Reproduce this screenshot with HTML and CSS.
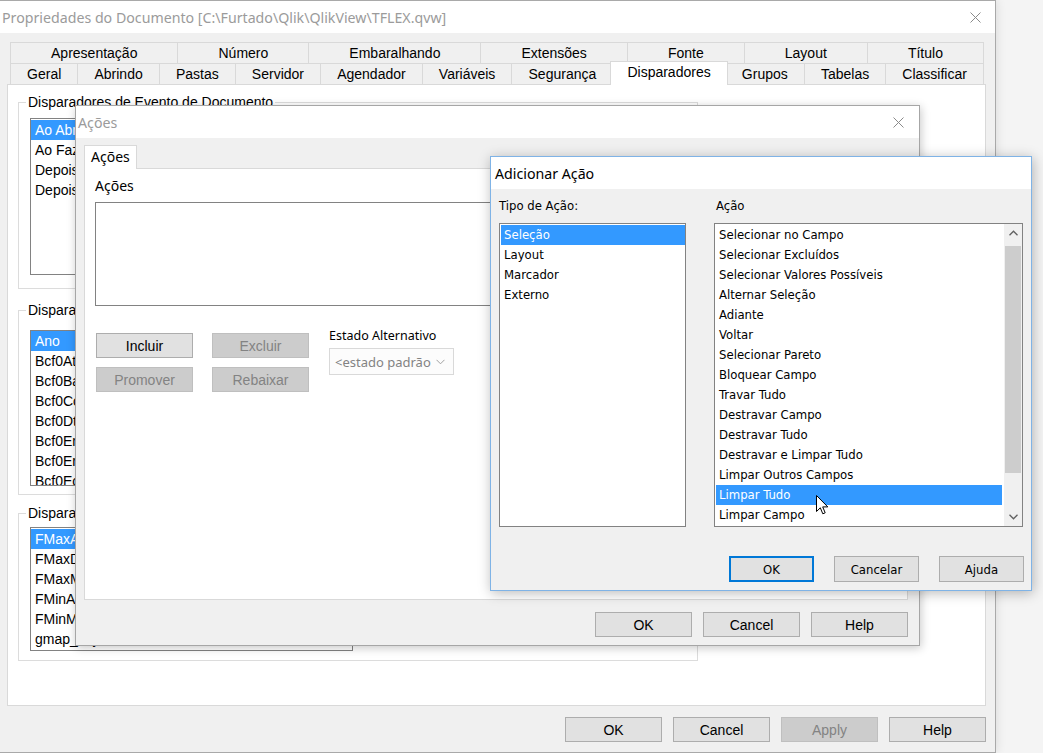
FILE: index.html
```html
<!DOCTYPE html>
<html lang="pt">
<head>
<meta charset="utf-8">
<title>Propriedades do Documento</title>
<link rel="stylesheet" href="styles.css">
</head>
<body>
<div class="desktop">

  <div class="win win-main">
    <div class="titlebar">
      <span class="title">Propriedades do Documento [C:\Furtado\Qlik\QlikView\TFLEX.qvw]</span>
      <span class="closebtn main-close"><svg width="11" height="11" viewBox="0 0 11 11"><path d="M0.5 0.5L10.5 10.5M10.5 0.5L0.5 10.5" stroke="#8a8a8a" stroke-width="1" fill="none"/></svg></span>
    </div>
    <div class="main-body">
      <div class="tabrows">
        <div class="tabrow">
          <div class="tab">Apresentação</div>
          <div class="tab">Número</div>
          <div class="tab">Embaralhando</div>
          <div class="tab">Extensões</div>
          <div class="tab">Fonte</div>
          <div class="tab">Layout</div>
          <div class="tab">Título</div>
        </div>
        <div class="tabrow">
          <div class="tab">Geral</div>
          <div class="tab">Abrindo</div>
          <div class="tab">Pastas</div>
          <div class="tab">Servidor</div>
          <div class="tab">Agendador</div>
          <div class="tab">Variáveis</div>
          <div class="tab">Segurança</div>
          <div class="tab sel">Disparadores</div>
          <div class="tab">Grupos</div>
          <div class="tab">Tabelas</div>
          <div class="tab">Classificar</div>
        </div>
      </div>
      <div class="main-panel">
        <fieldset class="group g1">
          <legend>Disparadores de Evento de Documento</legend>
          <div class="listbox lb1">
            <div class="lb-item sel">Ao Abrir</div>
            <div class="lb-item">Ao Fazer</div>
            <div class="lb-item">Depois</div>
            <div class="lb-item">Depois</div>
          </div>
        </fieldset>
        <fieldset class="group g2">
          <legend>Disparadores de Evento de Campo</legend>
          <div class="listbox lb2">
            <div class="lb-item sel">Ano</div>
            <div class="lb-item">Bcf0Ati</div>
            <div class="lb-item">Bcf0Ba</div>
            <div class="lb-item">Bcf0Co</div>
            <div class="lb-item">Bcf0Dt</div>
            <div class="lb-item">Bcf0Em</div>
            <div class="lb-item">Bcf0Er</div>
            <div class="lb-item">Bcf0Ec</div>
          </div>
        </fieldset>
        <fieldset class="group g3">
          <legend>Disparadores de Evento de Variável</legend>
          <div class="listbox lb3">
            <div class="lb-item sel">FMaxAno</div>
            <div class="lb-item">FMaxData</div>
            <div class="lb-item">FMaxMes</div>
            <div class="lb-item">FMinAno</div>
            <div class="lb-item">FMinMes</div>
            <div class="lb-item">gmap_key</div>
          </div>
        </fieldset>
      </div>
      <div class="btnrow main-btns">
        <button class="btn w97">OK</button>
        <button class="btn w97">Cancel</button>
        <button class="btn w97 disabled">Apply</button>
        <button class="btn w97">Help</button>
      </div>
    </div>
  </div>

  <div class="win win-acoes">
    <div class="titlebar">
      <span class="title">Ações</span>
      <span class="closebtn acoes-close"><svg width="11" height="11" viewBox="0 0 11 11"><path d="M0.5 0.5L10.5 10.5M10.5 0.5L0.5 10.5" stroke="#8a8a8a" stroke-width="1" fill="none"/></svg></span>
    </div>
    <div class="acoes-body">
      <div class="ptab">Ações</div>
      <div class="acoes-panel">
        <div class="ui-label big">Ações</div>
        <div class="actions-box"></div>
        <div class="controls">
          <div class="btngrid">
            <button class="btn w97">Incluir</button>
            <button class="btn w97 disabled">Excluir</button>
            <button class="btn w97 disabled">Promover</button>
            <button class="btn w97 disabled">Rebaixar</button>
          </div>
          <div class="estado">
            <div class="ui-label">Estado Alternativo</div>
            <div class="combo">
              <span>&lt;estado padrão</span>
              <svg width="9" height="6" viewBox="0 0 9 6"><path d="M0.5 0.8L4.5 4.8L8.5 0.8" fill="none" stroke="#a0a0a0" stroke-width="1"/></svg>
            </div>
          </div>
        </div>
      </div>
      <div class="btnrow acoes-btns">
        <button class="btn w97">OK</button>
        <button class="btn w97">Cancel</button>
        <button class="btn w97">Help</button>
      </div>
    </div>
  </div>

  <div class="win win-add">
    <div class="titlebar">
      <span class="title active">Adicionar Ação</span>
    </div>
    <div class="add-body">
      <div class="add-cols">
        <div class="col col1">
          <div class="add-label">Tipo de Ação:</div>
          <div class="add-list">
            <div class="items">
              <div class="add-item sel">Seleção</div>
              <div class="add-item">Layout</div>
              <div class="add-item">Marcador</div>
              <div class="add-item">Externo</div>
            </div>
          </div>
        </div>
        <div class="col col2">
          <div class="add-label lbl-acao">Ação</div>
          <div class="add-list">
            <div class="items">
              <div class="add-item">Selecionar no Campo</div>
              <div class="add-item">Selecionar Excluídos</div>
              <div class="add-item">Selecionar Valores Possíveis</div>
              <div class="add-item">Alternar Seleção</div>
              <div class="add-item">Adiante</div>
              <div class="add-item">Voltar</div>
              <div class="add-item">Selecionar Pareto</div>
              <div class="add-item">Bloquear Campo</div>
              <div class="add-item">Travar Tudo</div>
              <div class="add-item">Destravar Campo</div>
              <div class="add-item">Destravar Tudo</div>
              <div class="add-item">Destravar e Limpar Tudo</div>
              <div class="add-item">Limpar Outros Campos</div>
              <div class="add-item sel">Limpar Tudo</div>
              <div class="add-item">Limpar Campo</div>
            </div>
            <div class="scrollbar">
              <div class="sb-arrow"><svg width="9" height="6" viewBox="0 0 9 6"><path d="M0.5 5.2L4.5 1.2L8.5 5.2" fill="none" stroke="#606060" stroke-width="1.3"/></svg></div>
              <div class="sb-track"><div class="sb-thumb"></div></div>
              <div class="sb-arrow"><svg width="9" height="6" viewBox="0 0 9 6"><path d="M0.5 0.8L4.5 4.8L8.5 0.8" fill="none" stroke="#606060" stroke-width="1.3"/></svg></div>
            </div>
          </div>
        </div>
      </div>
      <div class="btnrow add-btns">
        <button class="btn w85 default">OK</button>
        <button class="btn w85">Cancelar</button>
        <button class="btn w85">Ajuda</button>
      </div>
    </div>
  </div>

  <svg class="cursor" width="13" height="21" viewBox="0 0 13 21"><path d="M0.5 0.5L0.5 16.5L4.3 12.8L6.8 18.8L9.2 17.8L6.7 11.9L11.8 11.9Z" fill="#fff" stroke="#000" stroke-width="1" stroke-linejoin="miter"/></svg>
</div>
</body>
</html>
```

FILE: styles.css
```css
* { box-sizing: border-box; }
html, body { margin: 0; padding: 0; }
body {
  width: 1043px;
  height: 753px;
  overflow: hidden;
  background: #f4f4f4;
  font-family: "Liberation Sans", Arial, sans-serif;
  font-size: 14px;
  color: #000;
}
.desktop { position: relative; width: 1043px; height: 753px; }

/* windows on the desktop */
.win {
  position: absolute;
  display: flex;
  flex-direction: column;
  background: #f0f0f0;
}
.win-main {
  left: 0; top: 0;
  width: 996px; height: 753px;
  border: 1px solid #a9a9a9;
  border-left: 0;
  box-shadow: 0 0 10px rgba(0,0,0,0.12);
}
.win-acoes {
  left: 75px; top: 105px;
  width: 845px; height: 541px;
  border: 1px solid #a6a6a6;
  box-shadow: 1px 2px 9px rgba(0,0,0,0.22);
}
.win-add {
  left: 490px; top: 156px;
  width: 542px; height: 435px;
  border: 1px solid #7fb3e6;
  box-shadow: 1px 2px 12px rgba(0,0,0,0.28);
}

.titlebar {
  flex: none;
  height: 32px;
  background: #fff;
  display: flex;
  align-items: center;
  justify-content: space-between;
  padding-left: 2px;
  font-family: "Noto Sans", "Open Sans", sans-serif;
  font-size: 14.2px;
}
.title { color: #9b9b9b; white-space: nowrap; }
.title.active { color: #000; padding-left: 2px; }
.closebtn { display: flex; justify-content: center; align-items: center; height: 32px; }
.main-close { width: 40px; }
.acoes-close { width: 42px; }

/* main window */
.main-body {
  flex: 1;
  display: flex;
  flex-direction: column;
  padding: 9px 9px 10px 7px;
}
.tabrows { margin: 0 3px; }
.tabrow { display: flex; height: 21px; }
.tab {
  flex: 1 1 auto;
  border: 1px solid #d9d9d9;
  border-bottom: 0;
  margin-right: -1px;
  text-align: center;
  line-height: 20px;
  white-space: nowrap;
  background: #f0f0f0;
}
.tab.sel {
  background: #fff;
  height: 24px;
  margin: -2px -3px -1px -2px;
  position: relative;
  z-index: 1;
  line-height: 20px;
}
.main-panel {
  height: 622px;
  background: #fff;
  border: 1px solid #d9d9d9;
  padding: 0 0 0 10px;
}

.group {
  width: 680px;
  margin: 0;
  border: 1px solid #dcdcdc;
  padding: 0 11px 0 11px;
  min-width: 0;
}
.group legend {
  padding: 0 2px;
  margin-left: -4px;
  line-height: 16px;
  white-space: nowrap;
}
.g1 { margin-top: 9px; padding-top: 8px; padding-bottom: 13px; }
.g2 { margin-top: 13px; padding-top: 12px; padding-bottom: 8px; }
.g3 { margin-top: 10px; padding-top: 6px; padding-bottom: 9px; }

.listbox {
  width: 323px;
  border: 1px solid #828282;
  background: #fff;
  overflow: hidden;
  padding-top: 1px;
}
.lb1 { height: 157px; }
.lb2 { height: 156px; padding-top: 0; }
.lb3 { height: 124px; }
.lb-item {
  height: 20px;
  line-height: 20px;
  padding-left: 4px;
  white-space: nowrap;
}
.lb-item.sel { background: #3399ff; color: #fff; }

/* buttons */
.btnrow { display: flex; justify-content: flex-end; }
.btn {
  height: 25px;
  margin: 0;
  padding: 0;
  font-family: "Liberation Sans", Arial, sans-serif;
  font-size: 14px;
  color: #000;
  background: #e1e1e1;
  border: 1px solid #adadad;
  border-radius: 0;
}
.btn.disabled { background: #cccccc; border-color: #bfbfbf; color: #838383; }
.w97 { width: 97px; }
.w85 { width: 85px; height: 26px; }
.main-btns { margin-top: 11px; gap: 11px; }

/* Ações window */
.acoes-body {
  flex: 1;
  display: flex;
  flex-direction: column;
  padding: 7px 11px 0 8px;
}
.ptab {
  width: 53px;
  height: 24px;
  border: 1px solid #d9d9d9;
  border-bottom: 0;
  background: #fff;
  margin-bottom: -1px;
  position: relative;
  z-index: 1;
  padding-left: 6px;
  font-family: "Noto Sans", "Open Sans", sans-serif;
  font-size: 14px;
  line-height: 22px;
}
.acoes-panel {
  height: 432px;
  background: #fff;
  border: 1px solid #d9d9d9;
  padding: 9px 10px 0 10px;
}
.ui-label {
  font-family: "Noto Sans", "Open Sans", sans-serif;
  font-size: 12.5px;
  line-height: 16px;
  white-space: nowrap;
}
.ui-label.big { font-size: 14px; }
.actions-box {
  height: 104px;
  margin-top: 8px;
  border: 1px solid #828282;
  background: #fff;
}
.controls { display: flex; margin-top: 27px; }
.btngrid {
  display: grid;
  grid-template-columns: 97px 97px;
  grid-auto-rows: 25px;
  column-gap: 19px;
  row-gap: 9px;
  margin-left: 1px;
}
.estado { margin-left: 20px; margin-top: -5px; }
.combo {
  width: 125px;
  height: 27px;
  margin-top: 4px;
  border: 1px solid #d9d9d9;
  background: #fcfcfc;
  display: flex;
  align-items: center;
  justify-content: space-between;
  padding: 0 8px 0 5px;
  font-family: "Noto Sans", "Open Sans", sans-serif;
  font-size: 13px;
  color: #838383;
  white-space: nowrap;
  overflow: hidden;
}
.acoes-btns { margin-top: 12px; gap: 11px; }

/* Adicionar Ação window */
.add-body {
  flex: 1;
  display: flex;
  flex-direction: column;
  padding: 9px 7px 0 8px;
  font-family: "DejaVu Sans Condensed", "DejaVu Sans", sans-serif;
  font-size: 13px;
}
.add-cols { display: flex; gap: 28px; }
.col1 { width: 187px; }
.col2 { width: 309px; }
.add-label { line-height: 16px; margin-bottom: 9px; white-space: nowrap; }
.lbl-acao { padding-left: 2px; }
.add-list {
  height: 304px;
  border: 1px solid #828282;
  background: #fff;
  display: flex;
  overflow: hidden;
}
.items { flex: 1; padding: 1px 0 0 1px; min-width: 0; }
.add-item {
  height: 20px;
  line-height: 20px;
  padding-left: 3px;
  white-space: nowrap;
}
.add-item.sel { background: #3399ff; color: #fff; }
.col2 .add-item.sel { margin-right: 2px; }
.scrollbar {
  width: 18px;
  flex: none;
  display: flex;
  flex-direction: column;
  background: #f0f0f0;
}
.sb-arrow { height: 18px; display: flex; align-items: center; justify-content: center; }
.sb-track { flex: 1; padding: 4px 1px 0 1px; }
.sb-thumb { height: 227px; background: #cdcdcd; }
.add-btns { margin-top: 29px; gap: 20px; }
.add-btns .btn {
  font-family: "DejaVu Sans Condensed", "DejaVu Sans", sans-serif;
  font-size: 13px;
}
.btn.default { border: 1px solid #0078d7; box-shadow: inset 0 0 0 1px #0078d7; }

.cursor { position: absolute; left: 816px; top: 495px; z-index: 10; }
```
